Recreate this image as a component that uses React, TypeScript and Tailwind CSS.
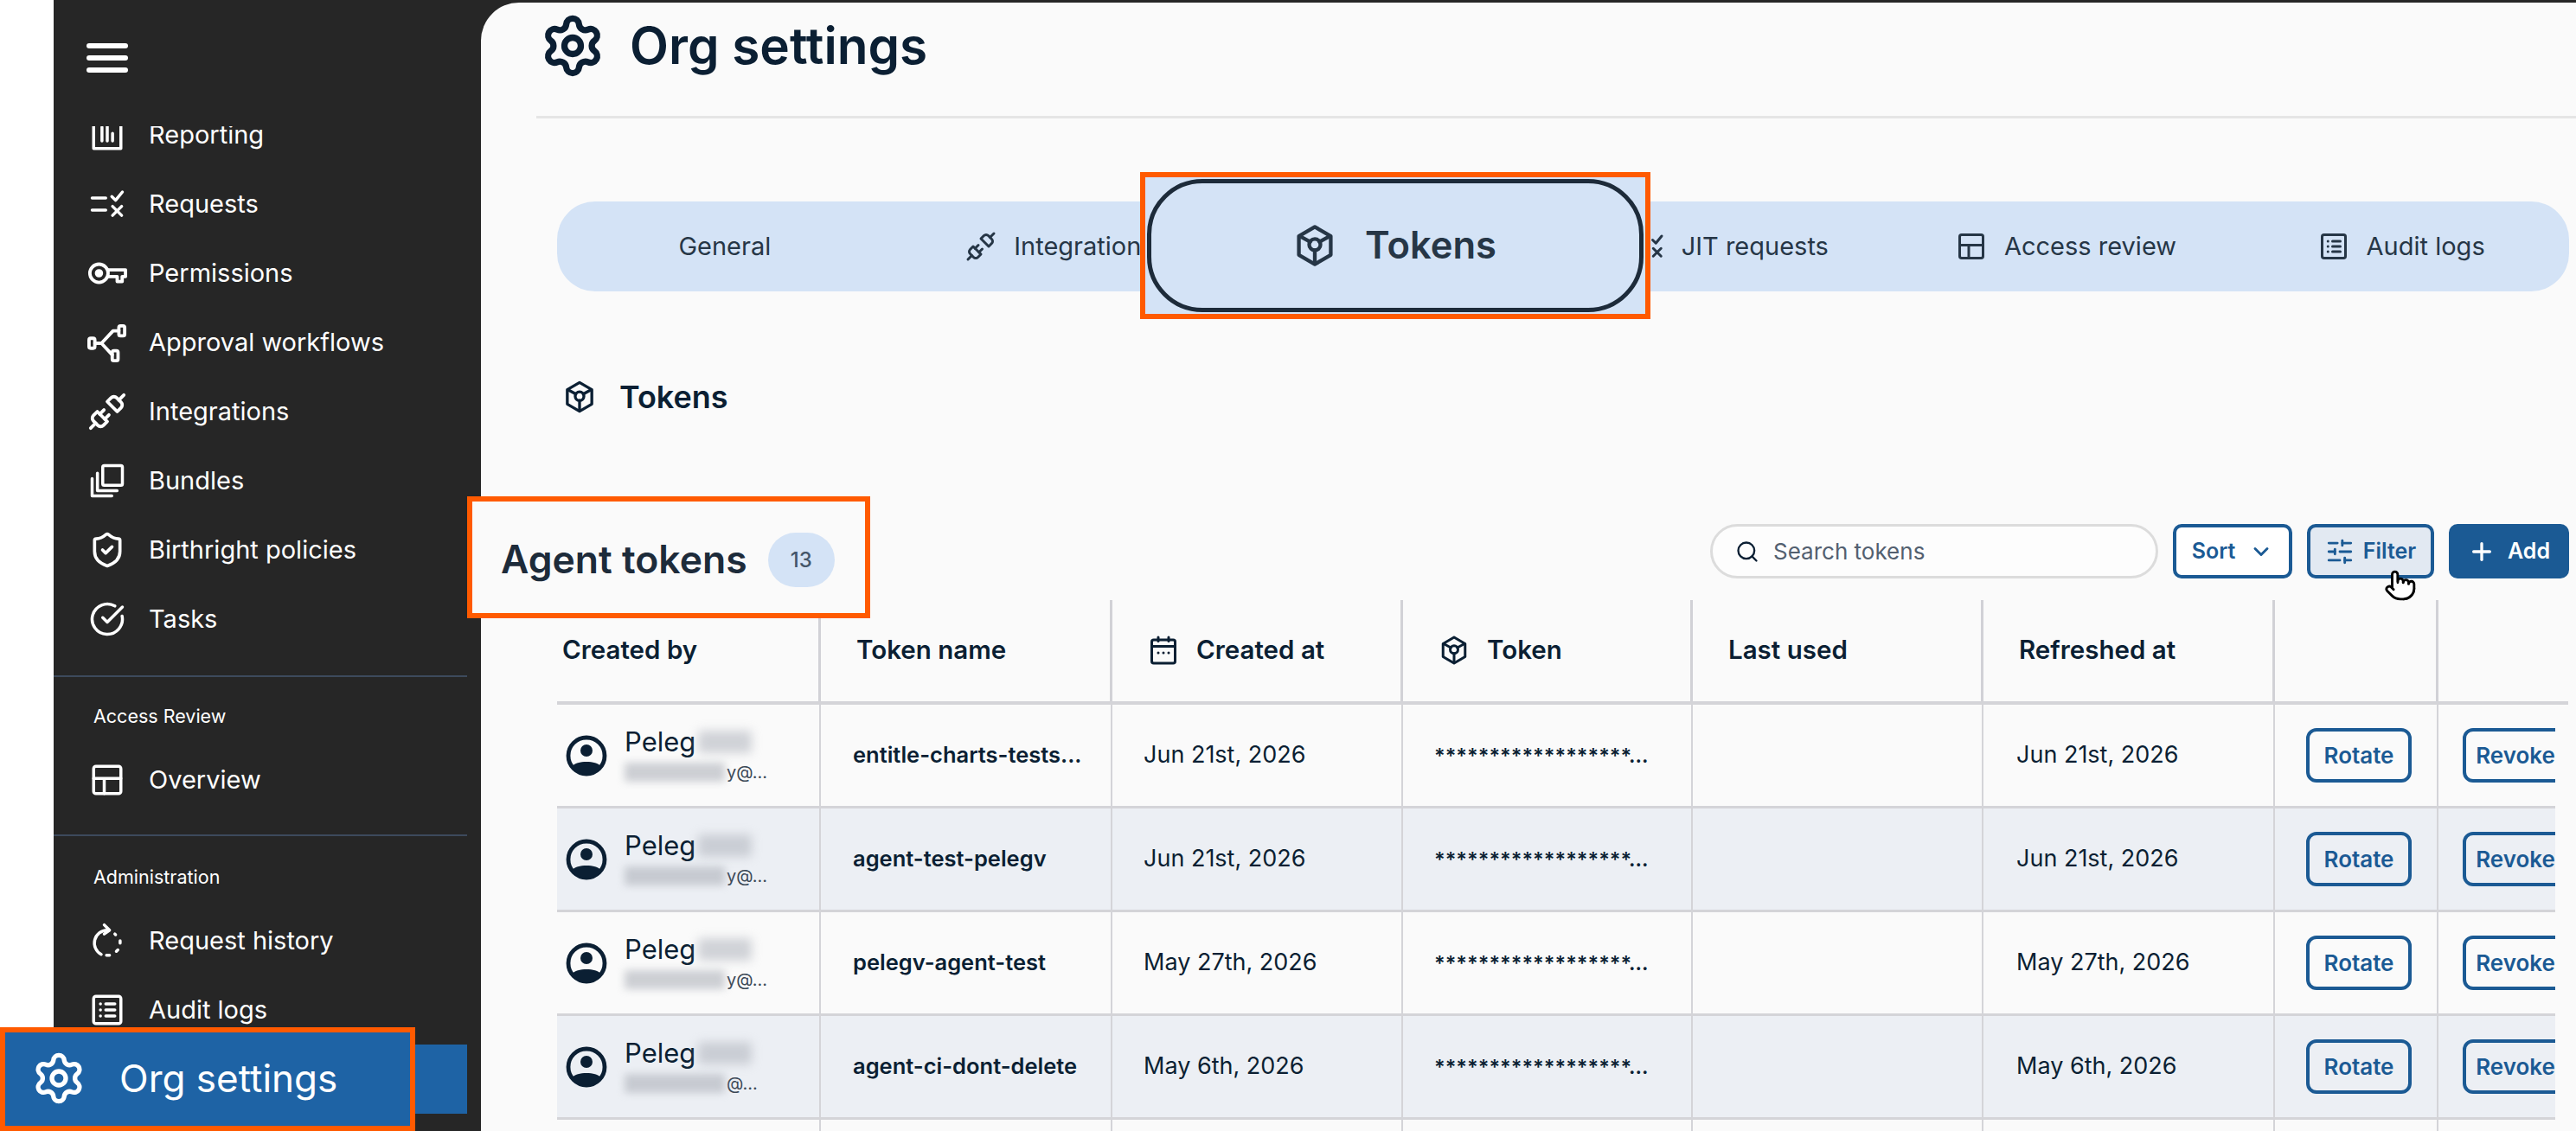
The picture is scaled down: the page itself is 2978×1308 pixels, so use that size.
import type { ReactNode } from "react";
import {
  ChevronDown,
  CircleCheckBig,
  Plus,
  Pointer,
  Search,
  Settings,
  ShieldCheck,
  SlidersHorizontal,
  Unplug,
} from "lucide-react";

type IconProps = { className?: string };

function Svg({ className, children }: IconProps & { children: ReactNode }) {
  return (
    <svg
      viewBox="0 0 24 24"
      fill="none"
      stroke="currentColor"
      strokeWidth="2"
      strokeLinecap="round"
      strokeLinejoin="round"
      className={className}
    >
      {children}
    </svg>
  );
}

function ReportingIcon({ className }: IconProps) {
  return (
    <Svg className={className}>
      <path d="M3 2v19h18V2M8.5 7v9M12 4v12M15.5 11v5" />
    </Svg>
  );
}

function RequestsIcon({ className }: IconProps) {
  return (
    <Svg className={className}>
      <path d="M2 8h9M2 16h9M15 7l2.5 2.5L22 4M15.5 13.5l6 6M21.5 13.5l-6 6" />
    </Svg>
  );
}

function KeyIcon({ className }: IconProps) {
  return (
    <Svg className={className}>
      <circle cx="7" cy="12" r="5.5" />
      <circle cx="7" cy="12" r="1.5" fill="currentColor" />
      <path d="M12.5 10H23v4h-2v3h-3v-3h-5.5" />
    </Svg>
  );
}

function WorkflowIcon({ className }: IconProps) {
  return (
    <Svg className={className}>
      <rect x="1" y="9.5" width="3.5" height="6" rx="1" />
      <rect x="19" y="2" width="3.5" height="6" rx="1" />
      <rect x="15" y="17" width="3.5" height="6" rx="1" />
      <path d="M4.5 12.5h4l7-7.5h3.5M8.5 12.5l6.5 7" />
    </Svg>
  );
}

function BundlesIcon({ className }: IconProps) {
  return (
    <Svg className={className}>
      <rect x="9" y="2" width="13" height="13" rx="1" />
      <path d="M5.5 7v11.500h13M2 10.500V22h13" />
    </Svg>
  );
}

function LayoutIcon({ className }: IconProps) {
  return (
    <Svg className={className}>
      <rect x="3" y="3" width="18" height="18" rx="1.500" />
      <path d="M3 11h18M10 11v10" />
    </Svg>
  );
}

function HistoryIcon({ className }: IconProps) {
  return (
    <Svg className={className}>
      <path d="M12 5a8.500 8.500 0 0 0-4 16" />
      <path d="M10 1.500 13.500 5 10 7.500" />
      <path d="M17 7.500l.5.500M20.500 12v1.500M19 18l-1 1M13.500 21.500h-2" />
    </Svg>
  );
}

function AuditIcon({ className }: IconProps) {
  return (
    <Svg className={className}>
      <rect x="3" y="3" width="18" height="18" rx="1.500" />
      <path d="M7.500 8h.01M11 8h6M7.500 12h.01M11 12h6M7.500 16h.01M11 16h6" />
    </Svg>
  );
}

function TokenIcon({ className }: IconProps) {
  return (
    <Svg className={className}>
      <path d="M12 2l8.500 5v10L12 22l-8.500-5V7z" />
      <circle cx="12" cy="11.500" r="3" />
      <path d="M12 14.500V21M9.500 10 4 7M14.500 10 20 7" />
    </Svg>
  );
}

function CalendarIcon({ className }: IconProps) {
  return (
    <Svg className={className}>
      <rect x="3" y="4" width="18" height="18" rx="1.500" />
      <path d="M3 9h18M8 2v3M16 2v3M8 14h.01M12 14h.01M16 14h.01" />
    </Svg>
  );
}

function AvatarIcon({ className }: IconProps) {
  return (
    <svg viewBox="0 0 24 24" className={className}>
      <circle cx="12" cy="12" r="10.500" fill="none" stroke="currentColor" strokeWidth="2.400" />
      <circle cx="12" cy="9" r="3.500" fill="currentColor" />
      <path d="M3.500 18.200c3-3.600 14-3.600 17 0A10.500 10.500 0 0 1 3.500 18.200z" fill="currentColor" />
    </svg>
  );
}

function NavRow({ icon, label }: { icon: ReactNode; label: string }) {
  return (
    <div className="flex h-[80px] w-[478px] shrink-0 items-center gap-[24px] pl-[38px] text-[29px] text-white">
      <span className="flex w-[48px] shrink-0 justify-center">{icon}</span>
      <span>{label}</span>
    </div>
  );
}

function NavLabel({
  children,
  className,
}: {
  children: ReactNode;
  className: string;
}) {
  return (
    <div
      className={`border-t-2 border-[#3d4a5c] pl-[46px] text-[21.5px] leading-[24px] text-white ${className}`}
    >
      {children}
    </div>
  );
}

function Sidebar() {
  const icon = "h-[42px] w-[42px]";
  return (
    <aside className="flex h-full w-[494px] shrink-0 flex-col bg-[#262626]">
      <div className="h-[146px] shrink-0 pl-[38px] pt-[50px]">
        <div className="flex h-[34px] w-[48px] flex-col justify-between">
          <span className="h-[6px] rounded-full bg-white" />
          <span className="h-[6px] rounded-full bg-white" />
          <span className="h-[6px] rounded-full bg-white" />
        </div>
      </div>
      <nav className="flex-1 overflow-hidden">
        <div className="-mt-[30px]">
          <NavRow icon={<ReportingIcon className={icon} />} label="Reporting" />
          <NavRow icon={<RequestsIcon className={icon} />} label="Requests" />
          <NavRow icon={<KeyIcon className="h-[46px] w-[46px]" />} label="Permissions" />
          <NavRow icon={<WorkflowIcon className="h-[46px] w-[46px]" />} label="Approval workflows" />
          <NavRow icon={<Unplug className="h-[46px] w-[46px]" strokeWidth={2} />} label="Integrations" />
          <NavRow icon={<BundlesIcon className={icon} />} label="Bundles" />
          <NavRow icon={<ShieldCheck className="h-[44px] w-[44px]" strokeWidth={2} />} label="Birthright policies" />
          <NavRow icon={<CircleCheckBig className={icon} strokeWidth={2} />} label="Tasks" />
          <div className="mt-[25px] w-[478px]">
            <NavLabel className="pt-[33px] pb-[22px]">Access Review</NavLabel>
            <NavRow icon={<LayoutIcon className={icon} />} label="Overview" />
          </div>
          <div className="mt-[23px] w-[478px]">
            <NavLabel className="pt-[35px] pb-[22px]">Administration</NavLabel>
            <NavRow icon={<HistoryIcon className={icon} />} label="Request history" />
            <NavRow icon={<AuditIcon className={icon} />} label="Audit logs" />
            {/* active row, its label is on the callout on top */}
            <div className="h-[80px] bg-[#1e63a5]" />
          </div>
        </div>
      </nav>
    </aside>
  );
}

const TABS = [
  { label: "General" },
  { label: "Integrations", icon: <Unplug className="h-[36px] w-[36px]" strokeWidth={2} /> },
  { label: "" },
  { label: "JIT requests", icon: <RequestsIcon className="h-[36px] w-[36px]" /> },
  { label: "Access review", icon: <LayoutIcon className="h-[36px] w-[36px]" /> },
  { label: "Audit logs", icon: <AuditIcon className="h-[36px] w-[36px]" /> },
];

const COLUMNS =
  "grid grid-cols-[305px_337px_336px_335px_336px_337px_189px_150px]";

const TOKENS = [
  { name: "entitle-charts-tests...", created: "Jun 21st, 2026", email: "y@..." },
  { name: "agent-test-pelegv", created: "Jun 21st, 2026", email: "y@..." },
  { name: "pelegv-agent-test", created: "May 27th, 2026", email: "y@..." },
  { name: "agent-ci-dont-delete", created: "May 6th, 2026", email: "@..." },
];

function HeadCell({
  icon,
  label,
  className = "pl-[41px]",
}: {
  icon?: ReactNode;
  label?: string;
  className?: string;
}) {
  return (
    <div
      className={`flex items-center gap-[20px] border-r-[3px] border-[#d1d1d6] pb-[2px] text-[29.5px] font-semibold text-[#0b1f33] ${className}`}
    >
      {icon}
      {label}
    </div>
  );
}

function RowButton({ label }: { label: string }) {
  return (
    <button className="flex h-[63px] w-[122px] shrink-0 items-center justify-center rounded-[12px] border-[4px] border-[#1b5a94] text-[26px] font-semibold text-[#1b5a94]">
      {label}
    </button>
  );
}

function TokenRow({
  token,
  shaded,
}: {
  token: (typeof TOKENS)[number];
  shaded: boolean;
}) {
  const cell = "flex items-center border-r-2 border-[#d4d4d8]";
  return (
    <div
      className={`${COLUMNS} h-[120px] border-b-[3px] border-[#d4d4d8] ${
        shaded ? "bg-[#eceff4]" : ""
      }`}
    >
      <div className={`${cell} gap-[20px] pl-[10px]`}>
        <AvatarIcon className="h-[48px] w-[48px] shrink-0 text-[#0b1f33]" />
        <div className="flex flex-col gap-[5px]">
          <div className="flex items-center gap-[3px] text-[31px] leading-[34px] text-[#0b1f33]">
            Peleg
            <span className="h-[26px] w-[62px] bg-[#b4b8c0] opacity-60 blur-[6px]" />
          </div>
          <div className="flex items-center gap-[2px] text-[20px] leading-[26px] text-[#3b4856]">
            <span className="h-[22px] w-[116px] bg-[#aeb2ba] opacity-60 blur-[5px]" />
            {token.email}
          </div>
        </div>
      </div>
      <div className={`${cell} pl-[37px] text-[25.5px] font-semibold text-[#0b1f33]`}>
        {token.name}
      </div>
      <div className={`${cell} pl-[36px] text-[27px] text-[#0b1f33]`}>{token.created}</div>
      <div className={`${cell} pl-[36px] text-[23.5px] font-semibold text-[#0b1f33]`}>
        ******************...
      </div>
      <div className={cell} />
      <div className={`${cell} pl-[38px] text-[27px] text-[#0b1f33]`}>{token.created}</div>
      <div className={`${cell} pl-[36px]`}>
        <RowButton label="Rotate" />
      </div>
      <div className="flex items-center pl-[28px]">
        <RowButton label="Revoke" />
      </div>
    </div>
  );
}

function TokensTable() {
  return (
    <div className="mt-[25px]">
      <div className={`${COLUMNS} h-[121px] w-[2325px] border-b-[4px] border-[#d4d4d8]`}>
        <HeadCell label="Created by" className="pl-[6px]" />
        <HeadCell label="Token name" />
        <HeadCell icon={<CalendarIcon className="h-[36px] w-[36px]" />} label="Created at" />
        <HeadCell icon={<TokenIcon className="h-[36px] w-[36px]" />} label="Token" className="pl-[41px]" />
        <HeadCell label="Last used" />
        <HeadCell label="Refreshed at" />
        <HeadCell />
        <div />
      </div>
      <div className="w-[2310px] overflow-hidden">
        {TOKENS.map((token, index) => (
          <TokenRow key={token.name} token={token} shaded={index % 2 === 1} />
        ))}
        <div className={`${COLUMNS} h-[120px]`}>
          {[0, 1, 2, 3, 4, 5, 6].map((column) => (
            <div key={column} className="border-r-2 border-[#d4d4d8]" />
          ))}
        </div>
      </div>
    </div>
  );
}

function Toolbar() {
  const button =
    "flex h-[63px] items-center justify-center rounded-[10px] border-[4px] border-[#1b5a94] text-[25px] font-semibold";
  return (
    <div className="mt-[125px] flex h-[63px] justify-end gap-[17px]">
      <div className="flex w-[518px] items-center gap-[16px] rounded-full border-[3px] border-[#dcdcdc] bg-[#fdfdfd] pl-[26px] text-[26px] text-[#536070]">
        <Search className="h-[28px] w-[28px] text-[#0b1f33]" strokeWidth={2} />
        Search tokens
      </div>
      <button className={`${button} w-[138px] gap-[16px] bg-white text-[#1b5a94]`}>
        Sort
        <ChevronDown className="h-[28px] w-[28px]" strokeWidth={2.5} />
      </button>
      <button className={`${button} w-[147px] gap-[10px] bg-[#e2e9f2] text-[#1b5a94]`}>
        <SlidersHorizontal className="h-[34px] w-[34px]" strokeWidth={2} />
        Filter
      </button>
      <button className={`${button} w-[139px] gap-[14px] bg-[#1b5a94] text-white`}>
        <Plus className="h-[32px] w-[32px]" strokeWidth={2.5} />
        Add
      </button>
    </div>
  );
}

function Main() {
  return (
    <main className="h-full flex-1 overflow-hidden rounded-tl-[44px] bg-[#fafafa]">
      <div className="ml-[64px] flex h-[98px] items-center gap-[28px] pl-[4px] pt-[2px] text-[#0b1f33]">
        <Settings className="h-[76px] w-[76px]" strokeWidth={2.3} />
        <h1 className="text-[58.5px] font-semibold">Org settings</h1>
      </div>
      <div className="ml-[64px] mt-[33px] h-[3px] bg-[#e5e5e5]" />

      <div className="ml-[88px] w-[2326px]">
        <div className="mt-[96px] grid h-[104px] grid-cols-6 rounded-[44px] bg-[#d4e3f6] text-[29px] text-[#263646]">
          {TABS.map((tab) => (
            <div key={tab.label} className="flex items-center justify-center gap-[20px]">
              {tab.icon}
              {tab.label}
            </div>
          ))}
        </div>

        <div className="mt-[100px] flex h-[44px] items-center gap-[26px] pl-[6px] text-[36px] font-semibold text-[#0b1f33]">
          <TokenIcon className="h-[40px] w-[40px]" />
          Tokens
        </div>

        <Toolbar />
        <TokensTable />
      </div>
    </main>
  );
}

export default function App() {
  return (
    <div className="relative flex h-[1308px] w-[2978px] overflow-hidden bg-white pl-[62px] font-['Inter','Noto_Sans',sans-serif]">
      <Sidebar />
      <div className="h-full flex-1 bg-[#262626] pt-[3px]">
        <Main />
      </div>

      {/* callouts pasted over the screenshot */}
      <div className="absolute left-0 top-[1188px] flex h-[120px] w-[480px] items-center gap-[38px] border-[6px] border-[#ff5a00] bg-[#1e63a5] pb-[2px] pl-[30px] text-[44px] text-white">
        <Settings className="h-[64px] w-[64px]" strokeWidth={2} />
        Org settings
      </div>

      <div className="absolute left-[1318px] top-[199px] h-[170px] w-[590px] border-[6px] border-[#ff5a00] bg-[#d4e3f6] p-[2px]">
        <div className="flex h-full items-center justify-center gap-[32px] rounded-[64px] border-[5px] border-[#1d2b3a] pr-[2px] text-[43.5px] font-semibold text-[#263646]">
          <TokenIcon className="h-[52px] w-[52px]" />
          Tokens
        </div>
      </div>

      <div className="absolute left-[540px] top-[574px] flex h-[141px] w-[466px] items-center gap-[24px] border-[6px] border-[#ff5a00] bg-[#fafafa] pl-[33px] pt-[6px] text-[#1d2b3a]">
        <span className="text-[44.5px] font-semibold">Agent tokens</span>
        <span className="flex h-[63px] w-[77px] items-center justify-center rounded-full bg-[#d4e3f6] text-[24px] font-medium text-[#44566a]">
          13
        </span>
      </div>

      <Pointer className="absolute left-[2756px] top-[658px] h-[38px] w-[38px] fill-white text-black" strokeWidth={1.8} />
    </div>
  );
}
